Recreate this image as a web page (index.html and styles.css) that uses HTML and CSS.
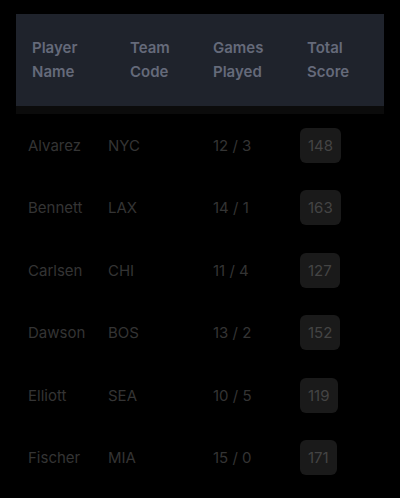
FILE: index.html
```html
<!DOCTYPE html>
<html>
<head>
<meta charset="utf-8">
<link rel="stylesheet" href="styles.css">
</head>
<body>
<div class="wrap">
  <table class="grid">
    <thead>
      <tr>
        <th class="h1">Player<br>Name</th>
        <th class="h2">Team<br>Code</th>
        <th class="h3">Games<br>Played</th>
        <th class="h4">Total<br>Score</th>
      </tr>
    </thead>
    <tbody>
      <tr><td class="c1">Alvarez</td><td class="c2">NYC</td><td class="c3">12 / 3</td><td class="c4"><span class="pill">148</span></td></tr>
      <tr><td class="c1">Bennett</td><td class="c2">LAX</td><td class="c3">14 / 1</td><td class="c4"><span class="pill">163</span></td></tr>
      <tr><td class="c1">Carlsen</td><td class="c2">CHI</td><td class="c3">11 / 4</td><td class="c4"><span class="pill">127</span></td></tr>
      <tr><td class="c1">Dawson</td><td class="c2">BOS</td><td class="c3">13 / 2</td><td class="c4"><span class="pill">152</span></td></tr>
      <tr><td class="c1">Elliott</td><td class="c2">SEA</td><td class="c3">10 / 5</td><td class="c4"><span class="pill">119</span></td></tr>
      <tr><td class="c1">Fischer</td><td class="c2">MIA</td><td class="c3">15 / 0</td><td class="c4"><span class="pill">171</span></td></tr>
    </tbody>
  </table>
</div>
</body>
</html>
```
FILE: styles.css
```css
html, body {
  margin: 0;
  padding: 0;
  background: #000;
}
body {
  font-family: "Inter", "Liberation Sans", sans-serif;
}
.wrap {
  padding: 14px 16px;
}
.grid {
  width: 100%;
  border-collapse: collapse;
  table-layout: fixed;
}
.grid thead th {
  background: #1f232c;
  color: #656a7a;
  font-size: 15px;
  font-weight: 600;
  line-height: 24px;
  height: 92px;
  padding: 0 0 0 16px;
  text-align: left;
  border-bottom: 8px solid #0b0b0b;
}
.grid thead th.h2 { padding-left: 22px; }
.grid thead th.h3 { padding-left: 13px; }
.grid thead th.h4 { padding-left: 15px; }
.grid tbody td {
  color: #343434;
  font-size: 15px;
  height: 62.5px;
  text-align: left;
  padding: 0;
}
.grid tbody td.c1 { padding-left: 12px; }
.grid tbody td.c2 { padding-left: 0; }
.grid tbody td.c3 { padding-left: 13px; }
.grid tbody td.c4 { padding-left: 8px; }
.pill {
  display: inline-block;
  background: #1a1a1a;
  color: #444;
  padding: 8px 8px;
  border-radius: 6px;
}
```
